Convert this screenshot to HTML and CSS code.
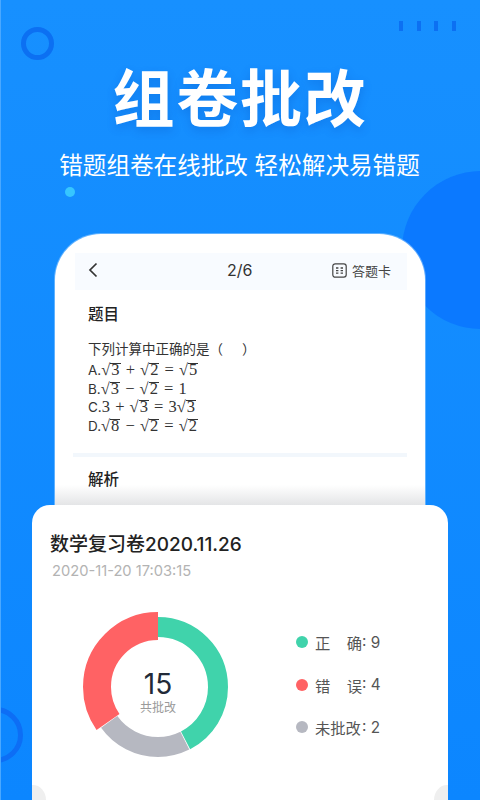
FILE: index.html
```html
<!DOCTYPE html>
<html lang="zh">
<head>
<meta charset="utf-8">
<title>组卷批改</title>
<link rel="stylesheet" href="styles.css">
</head>
<body>
<main class="screen">
  <div class="deco ring-top"></div>
  <div class="deco dashes"><i></i><i></i><i></i><i></i></div>
  <div class="deco dot"></div>
  <div class="deco blob"></div>
  <div class="deco ring-bottom"></div>

  <header class="hero">
    <h1>组卷批改</h1>
    <p>错题组卷在线批改 轻松解决易错题</p>
  </header>

  <section class="phone">
    <div class="nav">
      <svg class="back" width="12" height="16" viewBox="0 0 12 16"><path d="M9.5 1.5 3 8l6.5 6.5" fill="none" stroke="#333" stroke-width="1.7"/></svg>
      <span class="count">2/6</span>
      <span class="sheet">
        <svg width="15" height="15" viewBox="0 0 15 15"><rect x=".8" y=".8" width="13.4" height="13.4" rx="2.4" fill="none" stroke="#444" stroke-width="1.2"/><path d="M4 5h2.4M8.6 5H11M4 7.6h2.4M8.6 7.6H11M4 10.2h2.4M8.6 10.2H11" stroke="#444" stroke-width="1.3"/></svg>
        答题卡
      </span>
    </div>
    <h2 class="q-title">题目</h2>
    <div class="question">
      <div class="stem">下列计算中正确的是（&nbsp;&nbsp;&nbsp;&nbsp;&nbsp;）</div>
      <div>A.<span class="math"><span class="rad">√<b>3</b></span> + <span class="rad">√<b>2</b></span> = <span class="rad">√<b>5</b></span></span></div>
      <div>B.<span class="math"><span class="rad">√<b>3</b></span> − <span class="rad">√<b>2</b></span> = 1</span></div>
      <div>C.<span class="math">3 + <span class="rad">√<b>3</b></span> = 3<span class="rad">√<b>3</b></span></span></div>
      <div>D.<span class="math"><span class="rad">√<b>8</b></span> − <span class="rad">√<b>2</b></span> = <span class="rad">√<b>2</b></span></span></div>
    </div>
    <div class="divider"></div>
    <h2 class="a-title">解析</h2>
  </section>

  <section class="result">
    <h2>数学复习卷2020.11.26</h2>
    <time>2020-11-20 17:03:15</time>
    <div class="stats">
      <div class="donut">
        <svg width="160" height="160" viewBox="0 0 160 160">
          <g fill="none" transform="rotate(-90 80 80)">
            <circle cx="80" cy="80" r="60" stroke="#40d3ab" stroke-width="20" pathLength="360" stroke-dasharray="152.6 207.4"/>
            <circle cx="80" cy="80" r="60" stroke="#b6b8c1" stroke-width="20" pathLength="360" stroke-dasharray="81 279" stroke-dashoffset="-153.4"/>
            <circle cx="80" cy="80" r="61" stroke="#ff6264" stroke-width="28" pathLength="360" stroke-dasharray="125 235" stroke-dashoffset="-235"/>
          </g>
        </svg>
        <div class="total"><strong>15</strong><span>共批改</span></div>
      </div>
      <ul class="legend">
        <li><i class="green"></i><span class="lab"><span>正</span><span>确</span></span>: 9</li>
        <li><i class="red"></i><span class="lab"><span>错</span><span>误</span></span>: 4</li>
        <li><i class="grey"></i><span class="lab"><span>未批改</span></span>: 2</li>
      </ul>
    </div>
    <div class="corner left"></div>
    <div class="corner right"></div>
  </section>
</main>
</body>
</html>
```

FILE: styles.css
```css
* { box-sizing: border-box; }
html, body { margin: 0; padding: 0; }
body { font-family: Inter, "Noto Sans CJK SC", "Noto Sans", sans-serif; }

.screen {
  position: relative;
  width: 480px;
  height: 800px;
  overflow: hidden;
  display: flex;
  flex-direction: column;
  background: linear-gradient(180deg, #1790ff 0%, #0c86ff 100%);
  border-left: 1px solid #4aa8ff;
}

.deco { position: absolute; }
.ring-top { left: 20px; top: 27px; width: 33px; height: 33px; border: 5px solid #0c70f2; border-radius: 50%; }
.dashes { left: 398px; top: 21px; display: flex; gap: 13.6px; }
.dashes i { width: 4px; height: 10px; background: #0c70f2; }
.dot { left: 64px; top: 187px; width: 10px; height: 10px; border-radius: 50%; background: #36c6ff; }
.blob { left: 401px; top: 171px; width: 158px; height: 158px; border-radius: 50%; background: #0b79ff; }
.ring-bottom { left: -34px; top: 707px; width: 56px; height: 56px; border: 5px solid #0d6ef5; border-radius: 50%; }

.hero { position: relative; height: 234px; padding-top: 57px; text-align: center; color: #fff; }
.hero h1 {
  margin: 0 0 0 -1px;
  font-size: 62px;
  line-height: 86px;
  font-weight: 700;
  letter-spacing: 1.8px;
  text-shadow: 0 4px 10px rgba(0, 60, 170, .22);
}
.hero p { margin: 6px 0 0 -2px; font-size: 23.6px; line-height: 34px; font-weight: 400; }

.phone {
  position: relative;
  margin-left: 54px;
  width: 370px;
  height: 300px;
  flex: none;
  padding: 19px 18px 0;
  border-radius: 46px 46px 0 0;
  background: #fff;
  box-shadow: 0 0 0 1px rgba(160, 210, 255, .55);
  color: #222;
}
.nav {
  display: flex;
  align-items: center;
  justify-content: space-between;
  height: 37px;
  margin: 0 0 0 2px;
  padding: 0 16px 3px 12px;
  background: #f8fbff;
  position: relative;
}
.count { position: absolute; left: 152px; font-size: 16px; color: #333; }
.sheet { display: flex; align-items: center; gap: 5px; font-size: 13px; color: #444; }
.q-title, .a-title { margin: 0; font-size: 15.5px; line-height: 22px; font-weight: 500; color: #222; }
.q-title { margin: 14px 0 0 15px; }
.question { margin: 14px 0 0 15px; font-size: 13.5px; line-height: 18.75px; color: #333; }
.question > div { white-space: nowrap; height: 18.75px; }
.question > .stem { height: 20.75px; }
.math { font-family: "Liberation Serif", serif; font-size: 16.5px; word-spacing: 1px; }
.rad b { display: inline-block; font-weight: 400; line-height: 12px; border-top: 1px solid #333; padding: 0 1px; }
.divider { height: 4px; margin: 17px 0 0 0; background: #f2f7fc; }
.a-title { margin: 12px 0 0 15px; }
.phone::after {
  content: "";
  position: absolute;
  left: 0; right: 0; bottom: 29px;
  height: 20px;
  background: linear-gradient(180deg, rgba(225, 226, 228, 0), rgba(225, 226, 228, .9));
}

.result {
  position: relative;
  flex: 1;
  margin: -29px 0 0 31px;
  width: 416px;
  padding: 25px 18px 0;
  border-radius: 18px 18px 0 0;
  background: #fff;
  overflow: hidden;
}
.result h2 { margin: 0; font-size: 19px; line-height: 30px; font-weight: 500; color: #222; white-space: nowrap; }
.result time { display: block; margin: 1px 0 0 2px; font-size: 14.7px; line-height: 20px; color: #b3b3b3; }

.stats { display: flex; align-items: flex-start; margin-top: 26px; }
.donut { position: relative; width: 160px; height: 160px; margin-left: 28px; flex: none; }
.donut svg { display: block; }
.total { position: absolute; inset: 0; display: flex; flex-direction: column; align-items: center; padding-top: 63px; }
.total strong { font-weight: 400; font-size: 28px; line-height: 28px; color: #222a38; }
.total span { font-size: 12px; line-height: 18px; margin-top: 1px; color: #9a9a9a; }

.legend { list-style: none; margin: 14px 0 0 58px; padding: 0; font-size: 15.3px; color: #555; }
.legend li { display: flex; align-items: center; height: 42.5px; white-space: pre; }
.legend i { width: 12px; height: 12px; border-radius: 50%; margin-right: 7px; }
.lab { display: flex; justify-content: space-between; width: 47px; }
.green { background: #40d3ab; }
.red { background: #ff6264; }
.grey { background: #b6b8c1; }

.corner { position: absolute; top: 280px; width: 26px; height: 30px; border-radius: 50%; background: #efefef; }
.corner.left { left: -12px; }
.corner.right { right: -12px; }
```
